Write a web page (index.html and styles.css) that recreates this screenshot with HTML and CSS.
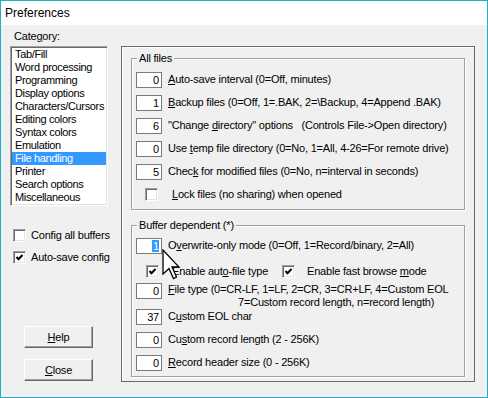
FILE: index.html
```html
<!DOCTYPE html>
<html lang="en">
<head>
    <meta charset="UTF-8">
    <title>Preferences</title>
    <link rel="stylesheet" href="styles.css">
</head>
<body>
    <div class="window">
        <div class="titlebar">Preferences</div>
        <div class="dialog">
            <div class="side">
                <div class="cat-label">Cate<u>g</u>ory:</div>
                <ul class="list">
                    <li>Tab/Fill</li>
                    <li>Word processing</li>
                    <li>Programming</li>
                    <li>Display options</li>
                    <li>Characters/Cursors</li>
                    <li>Editing colors</li>
                    <li>Syntax colors</li>
                    <li>Emulation</li>
                    <li class="selected">File handling</li>
                    <li>Printer</li>
                    <li>Search options</li>
                    <li>Miscellaneous</li>
                </ul>
                <div class="side-check first"><span class="box"></span>Config all buffers</div>
                <div class="side-check"><span class="box"><svg width="9" height="9" viewBox="0 0 9 9"><polyline points="1.5,4 3.5,6.2 7.5,2" fill="none" stroke="#000" stroke-width="2"/></svg></span>Auto-save config</div>
                <button class="btn help"><u>H</u>elp</button>
                <button class="btn"><u>C</u>lose</button>
            </div>
            <div class="frame">
                <fieldset class="group">
                    <legend>All files</legend>
                    <div class="row"><span class="field">0</span><span class="label"><u>A</u>uto-save interval (0=Off, minutes)</span></div>
                    <div class="row"><span class="field">1</span><span class="label"><u>B</u>ackup files (0=Off, 1=.BAK, 2=\Backup, 4=Append .BAK)</span></div>
                    <div class="row"><span class="field">6</span><span class="label">"Change <u>d</u>irectory" options &nbsp; (Controls File-&gt;Open directory)</span></div>
                    <div class="row"><span class="field">0</span><span class="label">Use <u>t</u>emp file directory (0=No, 1=All, 4-26=For remote drive)</span></div>
                    <div class="row"><span class="field">5</span><span class="label">Chec<u>k</u> for modified files (0=No, n=interval in seconds)</span></div>
                    <div class="row lock"><span class="box"></span><span class="label"><u>L</u>ock files (no sharing) when opened</span></div>
                </fieldset>
                <fieldset class="group second">
                    <legend>Buffer dependent (*)</legend>
                    <div class="row"><span class="field"><span class="sel-text">1</span></span><span class="label">O<u>v</u>erwrite-only mode (0=Off, 1=Record/binary, 2=All)</span></div>
                    <div class="row checks">
                        <div class="check-item wide"><span class="box"><svg width="9" height="9" viewBox="0 0 9 9"><polyline points="1.5,4 3.5,6.2 7.5,2" fill="none" stroke="#000" stroke-width="2"/></svg></span><span class="check-label">Enable aut<u>o</u>-file type</span></div>
                        <div class="check-item"><span class="box"><svg width="9" height="9" viewBox="0 0 9 9"><polyline points="1.5,4 3.5,6.2 7.5,2" fill="none" stroke="#000" stroke-width="2"/></svg></span><span class="check-label fast">Enable fast browse <u>m</u>ode</span></div>
                    </div>
                    <div class="row tall"><span class="field">0</span><span class="label"><u>F</u>ile type (0=CR-LF, 1=LF, 2=CR, 3=CR+LF, 4=Custom EOL<span class="line2">7=Custom record length, n=record length)</span></span></div>
                    <div class="row"><span class="field">37</span><span class="label">C<u>u</u>stom EOL char</span></div>
                    <div class="row"><span class="field">0</span><span class="label">Cu<u>s</u>tom record length (2 - 256K)</span></div>
                    <div class="row"><span class="field">0</span><span class="label"><u>R</u>ecord header size (0 - 256K)</span></div>
                </fieldset>
            </div>
        </div>
        <!-- mouse pointer over the dialog -->
        <svg class="cursor" width="19" height="31" viewBox="0 0 19 31">
            <polygon points="1,1 1,25 7,19.5 11.5,29.5 14.5,28 10,18 17,18" fill="#fff" stroke="#000" stroke-width="1.3" stroke-linejoin="miter"/>
        </svg>
    </div>
</body>
</html>
```

FILE: styles.css
```css
body {
    margin: 0;
    padding: 0;
    background: #f0f0f0;
    font-family: 'Liberation Sans', Arial, sans-serif;
    font-size: 11px;
    letter-spacing: -0.2px;
    color: #000;
}
u {
    text-decoration: underline;
    text-underline-offset: 1px;
}
.window {
    position: relative;
    width: 488px;
    height: 398px;
    box-sizing: border-box;
    border: 1px solid #1bb1c6;
    background: #f0f0f0;
}
.titlebar {
    height: 24px;
    line-height: 24px;
    padding-left: 4px;
    background: #fff;
    font-size: 12px;
    letter-spacing: 0;
}
.dialog {
    display: flex;
    height: 372px;
}
.side {
    width: 120px;
    padding-left: 9px;
    box-sizing: border-box;
    display: flex;
    flex-direction: column;
    align-items: flex-start;
}
.cat-label {
    margin: 5px 0 0 4px;
    line-height: 13px;
}
.list {
    list-style: none;
    margin: 3px 0 0 0;
    padding: 0;
    width: 98px;
    height: 160px;
    box-sizing: border-box;
    background: #fff;
    border: 1px solid;
    border-color: #a0a0a0 #fff #fff #a0a0a0;
    box-shadow: inset 1px 1px 0 #696969, inset -1px -1px 0 #e3e3e3;
    padding-top: 1px;
    overflow: hidden;
}
.list li {
    line-height: 13px;
    height: 13px;
    padding-left: 3px;
    margin: 0 1px;
    white-space: nowrap;
    letter-spacing: -0.35px;
}
.list li.selected {
    background: #3399ff;
    color: #fff;
}
.box {
    display: inline-flex;
    align-items: center;
    justify-content: center;
    width: 13px;
    height: 13px;
    box-sizing: border-box;
    background: #fff;
    border: 1px solid;
    border-color: #a0a0a0 #fff #fff #a0a0a0;
    box-shadow: inset 1px 1px 0 #696969, inset -1px -1px 0 #e3e3e3;
    flex: none;
}
.side-check {
    display: flex;
    align-items: center;
    line-height: 13px;
    margin: 9px 0 0 3px;
}
.side-check.first {
    margin-top: 23px;
}
.side-check .box {
    margin-right: 5px;
}
.btn {
    width: 69px;
    height: 22px;
    margin: 11px 0 0 14px;
    padding: 0;
    font: inherit;
    letter-spacing: inherit;
    color: #000;
    background: #f0f0f0;
    border: 1px solid;
    border-color: #fff #696969 #696969 #fff;
    box-shadow: inset -1px -1px 0 #a0a0a0;
}
.btn.help {
    margin-top: 62px;
}
.frame {
    width: 354px;
    height: 336px;
    margin-top: 21px;
    box-sizing: border-box;
    border: 1px solid #696969;
    box-shadow: inset 1px 1px 0 #fff;
    padding: 5px 9px 0 9px;
}
.group {
    margin: 0;
    padding: 3px 0 3px 4px;
    border: 1px solid #a0a0a0;
    box-shadow: inset 1px 1px 0 #fff, 1px 1px 0 #fff;
    min-width: 0;
}
.group.second {
    margin-top: 9px;
    padding-top: 2px;
    padding-bottom: 2px;
}
.group legend {
    margin-left: 1px;
    padding: 0 2px;
    line-height: 13px;
    background: #f0f0f0;
}
.row {
    display: flex;
    align-items: center;
    height: 23px;
    white-space: nowrap;
}
.field {
    display: block;
    width: 26px;
    height: 16px;
    box-sizing: border-box;
    border: 1px solid #7a7a7a;
    background: #fff;
    text-align: right;
    padding-right: 2px;
    line-height: 14px;
    flex: none;
}
.sel-text {
    background: #3399ff;
    color: #fff;
    padding: 0 0 0 1px;
}
.label {
    margin-left: 6px;
    line-height: 13px;
}
.lock .box {
    margin-left: 9px;
}
.lock .label {
    margin-left: 14px;
}
.row.checks {
    height: 24px;
    align-items: flex-start;
    padding-top: 8px;
    box-sizing: border-box;
}
.check-item {
    display: flex;
    align-items: center;
    line-height: 13px;
}
.check-item.wide {
    width: 136px;
    margin-left: 10px;
}
.check-label {
    margin-left: 13px;
}
.check-label.fast {
    margin-left: 12px;
}
.row.tall {
    height: 24px;
    align-items: flex-start;
}
.row.tall .field {
    margin-top: 2px;
}
.row.tall .label {
    margin-top: 2px;
}
.line2 {
    display: block;
    padding-left: 70px;
}
.cursor {
    position: absolute;
    left: 161px;
    top: 248px;
}
```
